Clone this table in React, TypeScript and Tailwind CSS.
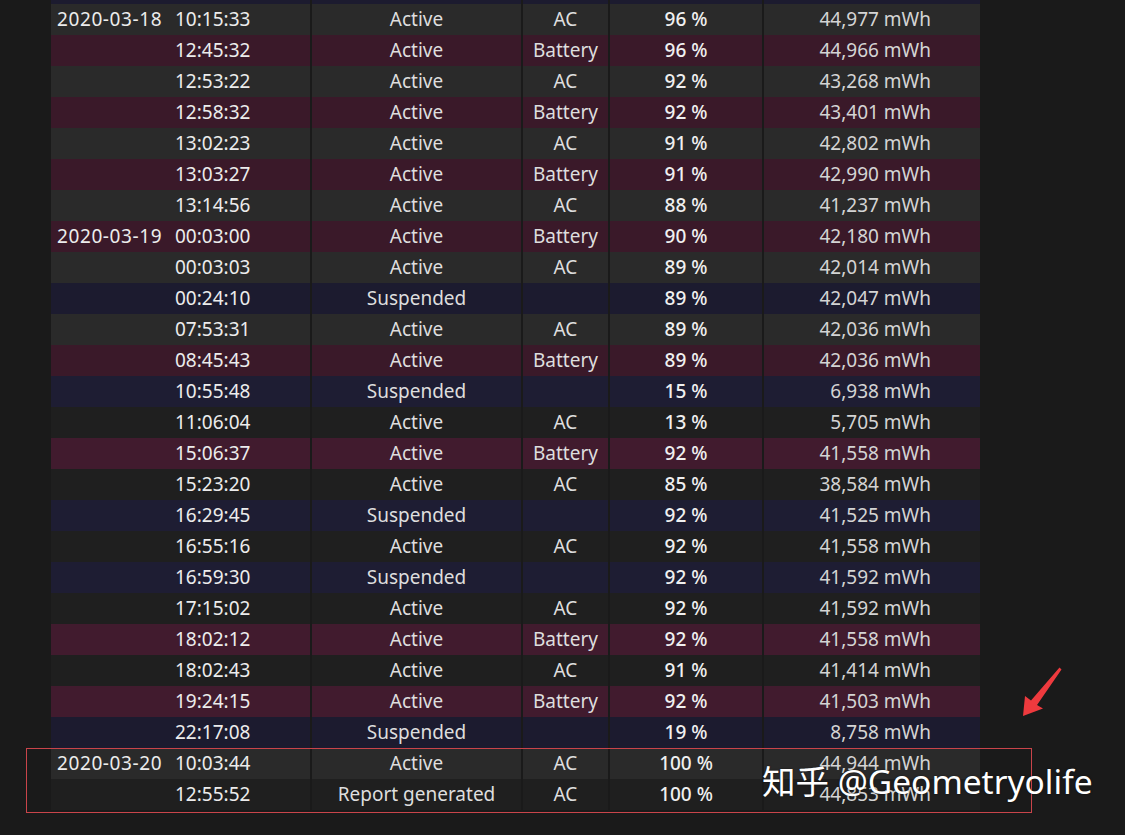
import React from "react";

type Row = { d?: string; t: string; s: string; src: string; p: string; c: string };

const rows: Row[] = [
  { t: "21:40:11", s: "Suspended", src: "", p: "96 %", c: "45,012 mWh" },
  { d: "2020-03-18", t: "10:15:33", s: "Active", src: "AC", p: "96 %", c: "44,977 mWh" },
  { t: "12:45:32", s: "Active", src: "Battery", p: "96 %", c: "44,966 mWh" },
  { t: "12:53:22", s: "Active", src: "AC", p: "92 %", c: "43,268 mWh" },
  { t: "12:58:32", s: "Active", src: "Battery", p: "92 %", c: "43,401 mWh" },
  { t: "13:02:23", s: "Active", src: "AC", p: "91 %", c: "42,802 mWh" },
  { t: "13:03:27", s: "Active", src: "Battery", p: "91 %", c: "42,990 mWh" },
  { t: "13:14:56", s: "Active", src: "AC", p: "88 %", c: "41,237 mWh" },
  { d: "2020-03-19", t: "00:03:00", s: "Active", src: "Battery", p: "90 %", c: "42,180 mWh" },
  { t: "00:03:03", s: "Active", src: "AC", p: "89 %", c: "42,014 mWh" },
  { t: "00:24:10", s: "Suspended", src: "", p: "89 %", c: "42,047 mWh" },
  { t: "07:53:31", s: "Active", src: "AC", p: "89 %", c: "42,036 mWh" },
  { t: "08:45:43", s: "Active", src: "Battery", p: "89 %", c: "42,036 mWh" },
  { t: "10:55:48", s: "Suspended", src: "", p: "15 %", c: "6,938 mWh" },
  { t: "11:06:04", s: "Active", src: "AC", p: "13 %", c: "5,705 mWh" },
  { t: "15:06:37", s: "Active", src: "Battery", p: "92 %", c: "41,558 mWh" },
  { t: "15:23:20", s: "Active", src: "AC", p: "85 %", c: "38,584 mWh" },
  { t: "16:29:45", s: "Suspended", src: "", p: "92 %", c: "41,525 mWh" },
  { t: "16:55:16", s: "Active", src: "AC", p: "92 %", c: "41,558 mWh" },
  { t: "16:59:30", s: "Suspended", src: "", p: "92 %", c: "41,592 mWh" },
  { t: "17:15:02", s: "Active", src: "AC", p: "92 %", c: "41,592 mWh" },
  { t: "18:02:12", s: "Active", src: "Battery", p: "92 %", c: "41,558 mWh" },
  { t: "18:02:43", s: "Active", src: "AC", p: "91 %", c: "41,414 mWh" },
  { t: "19:24:15", s: "Active", src: "Battery", p: "92 %", c: "41,503 mWh" },
  { t: "22:17:08", s: "Suspended", src: "", p: "19 %", c: "8,758 mWh" },
  { d: "2020-03-20", t: "10:03:44", s: "Active", src: "AC", p: "100 %", c: "44,944 mWh" },
  { t: "12:55:52", s: "Report generated", src: "AC", p: "100 %", c: "44,853 mWh" },
];

function rowBg(r: Row, i: number) {
  const odd = i % 2 === 1;
  if (r.s === "Suspended") return odd ? "bg-[#1e1d33]" : "bg-[#1c1b2f]";
  if (r.src === "Battery") return odd ? "bg-[#411b2e]" : "bg-[#3a1929]";
  return odd ? "bg-[#2a2a2a]" : "bg-[#1f1f1f]";
}

export default function App() {
  return (
    <div
      className="relative w-[1125px] h-[835px] overflow-hidden bg-[#1a1a1a] text-[19px] text-[#dedede]"
      style={{ fontFamily: '"Noto Sans", "Noto Sans CJK SC", sans-serif' }}
    >
      <div className="ml-[51px] mt-[-27px] flex flex-col gap-y-[2px]">
        {rows.map((r, i) => {
          const bg = rowBg(r, i);
          return (
            <div
              key={i}
              className="grid grid-cols-[259px_209px_85px_152px_216px] gap-x-[2px] h-[29px] leading-[31px]"
            >
              <div className={`${bg} flex pl-[6px] text-[#ececec]`}>
                <span className="w-[118px] tracking-[0.6px]">{r.d ?? ""}</span>
                <span>{r.t}</span>
              </div>
              <div className={`${bg} text-center`}>{r.s}</div>
              <div className={`${bg} text-center`}>{r.src}</div>
              <div className={`${bg} text-center font-medium text-[#f0f0f0]`}>{r.p}</div>
              <div className={`${bg} text-right pr-[49px] text-[#d4d4d4]`}>{r.c}</div>
            </div>
          );
        })}
      </div>

      {/* annotation box */}
      <div className="absolute left-[26px] top-[748px] w-[1006px] h-[65px] border border-[#c9444a]" />

      {/* annotation arrow */}
      <svg className="absolute left-[1010px] top-[660px]" width="60" height="65" viewBox="0 0 60 65">
        <path d="M49.5 7.5 L51.5 9.5 L27 45 L33 48.5 L13 56 L15 36 L21 40.5 Z" fill="#ee3a3e" />
      </svg>

      {/* watermark */}
      <div className="absolute left-[762px] top-[757px] text-[33.5px] leading-[48px] text-white whitespace-nowrap [text-shadow:0_0_2px_rgba(0,0,0,0.5)]">
        知乎 @Geometryolife
      </div>
    </div>
  );
}
